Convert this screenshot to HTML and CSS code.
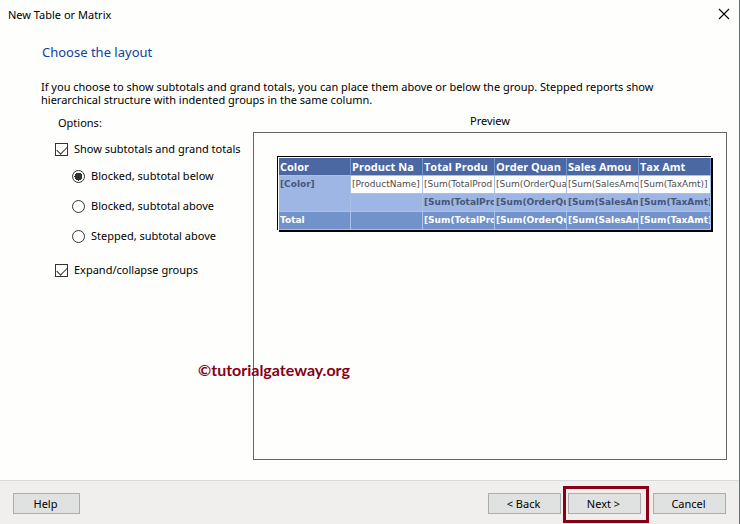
FILE: index.html
```html
<!DOCTYPE html>
<html lang="en">
<head>
    <meta charset="utf-8">
    <title>New Table or Matrix</title>
    <link rel="stylesheet" href="styles.css">
</head>
<body>
<form class="dialog">
    <header class="titlebar">
        <span>New Table or Matrix</span>
        <button type="button" class="close" aria-label="Close">
            <svg width="12" height="12" viewBox="0 0 12 12"><path d="M1 1L11 11M11 1L1 11" fill="none" stroke="#000" stroke-width="1.1"/></svg>
        </button>
    </header>

    <h1>Choose the layout</h1>
    <p class="intro">If you choose to show subtotals and grand totals, you can place them above or below the group. Stepped reports show hierarchical structure with indented groups in the same column.</p>

    <main class="content">
        <section class="options">
            <h2>Options:</h2>
            <label class="option"><input type="checkbox" checked>Show subtotals and grand totals</label>
            <label class="option nested"><input type="radio" name="layout" checked>Blocked, subtotal below</label>
            <label class="option nested"><input type="radio" name="layout">Blocked, subtotal above</label>
            <label class="option nested"><input type="radio" name="layout">Stepped, subtotal above</label>
            <label class="option last"><input type="checkbox" checked>Expand/collapse groups</label>
        </section>

        <section class="preview">
            <h2>Preview</h2>
            <div class="preview-box">
                <table>
                    <thead>
                        <tr>
                            <th>Color</th>
                            <th>Product Na</th>
                            <th>Total Produ</th>
                            <th>Order Quan</th>
                            <th>Sales Amou</th>
                            <th>Tax Amt</th>
                        </tr>
                    </thead>
                    <tbody>
                        <tr class="detail">
                            <td class="group" rowspan="2">[Color]</td>
                            <td>[ProductName]</td>
                            <td>[Sum(TotalProd</td>
                            <td>[Sum(OrderQua</td>
                            <td>[Sum(SalesAmo</td>
                            <td>[Sum(TaxAmt)]</td>
                        </tr>
                        <tr class="subtotal">
                            <td></td>
                            <td>[Sum(TotalPro</td>
                            <td>[Sum(OrderQu</td>
                            <td>[Sum(SalesAm</td>
                            <td>[Sum(TaxAmt)</td>
                        </tr>
                        <tr class="total">
                            <td>Total</td>
                            <td></td>
                            <td>[Sum(TotalPro</td>
                            <td>[Sum(OrderQu</td>
                            <td>[Sum(SalesAm</td>
                            <td>[Sum(TaxAmt)</td>
                        </tr>
                    </tbody>
                </table>
            </div>
            <span class="watermark">©tutorialgateway.org</span>
        </section>
    </main>

    <footer class="buttons">
        <button type="button" class="help">Help</button>
        <button type="button">&lt; Back</button>
        <button type="button" class="next">Next &gt;</button>
        <button type="button" class="cancel">Cancel</button>
    </footer>
</form>
</body>
</html>
```

FILE: styles.css
```css
* {
    box-sizing: border-box;
}
body {
    margin: 0;
    font: 11px/13px "Noto Sans", "Open Sans", sans-serif;
    color: #000;
    background: #fefefd;
}
.dialog {
    display: flex;
    flex-direction: column;
    min-height: 100vh;
    border-right: 1px solid #2f7cbe;
}
.titlebar {
    display: flex;
    justify-content: space-between;
    align-items: center;
    height: 28px;
    padding: 0 9px 0 8px;
}
.close {
    display: flex;
    padding: 0;
    border: none;
    background: none;
}
h1 {
    margin: 14px 42px 0;
    font-size: 13px;
    line-height: 20px;
    font-weight: normal;
    color: #0f3f9f;
}
h2 {
    margin: 0;
    font-size: 11px;
    font-weight: normal;
}
.intro {
    margin: 18px 41px 0;
}
.content {
    display: flex;
    flex: 1;
    padding: 8px 12px 20px 55px;
}
.options {
    width: 198px;
}
.options h2 {
    margin: 2px 3px 14px;
}
.option {
    display: flex;
    align-items: flex-start;
    gap: 6px;
    height: 13px;
    margin-bottom: 14px;
    line-height: 11px;
    white-space: nowrap;
}
.option.nested {
    margin: 0 0 17px 17px;
}
.option.last {
    margin-top: 21px;
}
input {
    appearance: none;
    flex: none;
    width: 13px;
    height: 13px;
    margin: 0;
    border: 1px solid #333;
    background: #fff;
}
input[type="checkbox"]:checked::before {
    content: "";
    display: block;
    width: 9px;
    height: 5px;
    margin: 2px 1px;
    border: solid #333;
    border-width: 0 0 1px 1px;
    transform: rotate(-45deg);
}
input[type="radio"] {
    border-radius: 50%;
}
input[type="radio"]:checked {
    background: radial-gradient(circle, #333 4px, #fff 4px);
}
.preview {
    position: relative;
    display: flex;
    flex: 1;
    flex-direction: column;
    min-width: 0;
}
.preview h2 {
    margin-bottom: 5px;
    text-align: center;
}
.preview-box {
    flex: 1;
    padding: 23px 15px 24px 23px;
    border: 1px solid #666;
}
table {
    width: 100%;
    padding: 1px 0 0 1px;
    table-layout: fixed;
    border-collapse: separate;
    border-spacing: 0;
    border: solid #000;
    border-width: 1px 0 0 1px;
    box-shadow: 2px 2px #000;
    background: #fff;
    font-family: "DejaVu Sans", sans-serif;
    font-size: 9px;
}
th, td {
    height: 18px;
    padding: 1px;
    border-right: 1px solid #a9c0e8;
    border-bottom: 1px solid #a9c0e8;
    overflow: hidden;
    text-align: left;
    vertical-align: top;
    white-space: nowrap;
    line-height: 15px;
}
th {
    font-family: "Open Sans", sans-serif;
    font-size: 11px;
    color: #fff;
    background: #4c68a2;
    border-right-color: #7292cc;
}
.detail td {
    color: #4d4d4d;
    background: #fff;
}
.detail .group, .subtotal td {
    font-weight: bold;
    color: #465678;
    background: #9eb6e4;
}
.total td {
    font-weight: bold;
    color: #fff;
    background: #7292cc;
}
.watermark {
    position: absolute;
    top: 246px;
    left: -55px;
    font: bold 16px/20px Lato, sans-serif;
    color: #870016;
}
.buttons {
    display: flex;
    gap: 7px;
    padding: 12px 13px 10px;
    border-top: 1px solid #d9d9d9;
    background: #f0efee;
}
.buttons button {
    width: 73px;
    height: 21px;
    padding: 0 2px 1px 0;
    border: 1px solid #adadad;
    background: #e0e2e1;
    font: inherit;
    color: #000;
}
.buttons .help {
    width: 67px;
    margin-right: auto;
}
.next {
    position: relative;
}
.next::after {
    content: "";
    position: absolute;
    inset: -8px -9px -10px -6px;
    border: 3px solid #870016;
}
.buttons .cancel {
    margin-left: 5px;
}
```
